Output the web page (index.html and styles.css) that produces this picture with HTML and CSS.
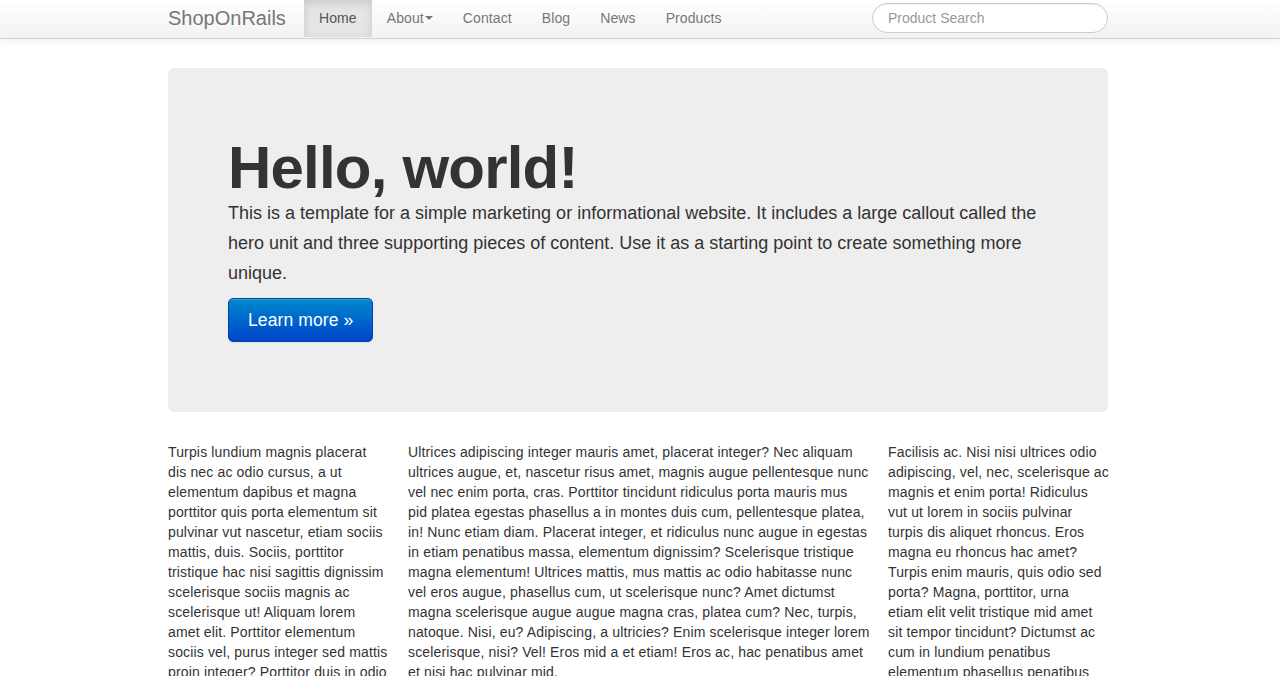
FILE: index.html
```html
<!DOCTYPE html>
<html>
<head>
<meta charset="utf-8">
<title>ShopOnRails</title>
<link rel="stylesheet" href="styles.css">
</head>
<body>
<div class="navbar">
  <div class="container nav-row">
    <a class="brand" href="#">ShopOnRails</a>
    <ul class="nav">
      <li class="active"><a href="#">Home</a></li>
      <li><a href="#">About<span class="caret"></span></a></li>
      <li><a href="#">Contact</a></li>
      <li><a href="#">Blog</a></li>
      <li><a href="#">News</a></li>
      <li><a href="#">Products</a></li>
    </ul>
    <form class="navbar-search">
      <input class="search-query" type="text" placeholder="Product Search">
    </form>
  </div>
</div>

<div class="container">
  <div class="hero-unit">
    <h1>Hello, world!</h1>
    <p class="lead">This is a template for a simple marketing or informational website. It includes a large callout called the hero unit and three supporting pieces of content. Use it as a starting point to create something more unique.</p>
    <p class="cta"><a class="btn-primary" href="#">Learn more &raquo;</a></p>
  </div>

  <div class="row">
    <div class="span3">
      <p>Turpis lundium magnis placerat<br>
      dis nec ac odio cursus, a ut<br>
      elementum dapibus et magna<br>
      porttitor quis porta elementum sit<br>
      pulvinar vut nascetur, etiam sociis<br>
      mattis, duis. Sociis, porttitor<br>
      tristique hac nisi sagittis dignissim<br>
      scelerisque sociis magnis ac<br>
      scelerisque ut! Aliquam lorem<br>
      amet elit. Porttitor elementum<br>
      sociis vel, purus integer sed mattis<br>
      proin integer? Porttitor duis in odio<br>
      magna, dis et aliquet sed tortor<br>
      rhoncus nisi.</p>
    </div>
    <div class="span6">
      <p>Ultrices adipiscing integer mauris amet, placerat integer? Nec aliquam<br>
      ultrices augue, et, nascetur risus amet, magnis augue pellentesque nunc<br>
      vel nec enim porta, cras. Porttitor tincidunt ridiculus porta mauris mus<br>
      pid platea egestas phasellus a in montes duis cum, pellentesque platea,<br>
      in! Nunc etiam diam. Placerat integer, et ridiculus nunc augue in egestas<br>
      in etiam penatibus massa, elementum dignissim? Scelerisque tristique<br>
      magna elementum! Ultrices mattis, mus mattis ac odio habitasse nunc<br>
      vel eros augue, phasellus cum, ut scelerisque nunc? Amet dictumst<br>
      magna scelerisque augue augue magna cras, platea cum? Nec, turpis,<br>
      natoque. Nisi, eu? Adipiscing, a ultricies? Enim scelerisque integer lorem<br>
      scelerisque, nisi? Vel! Eros mid a et etiam! Eros ac, hac penatibus amet<br>
      et nisi hac pulvinar mid.</p>
    </div>
    <div class="span3">
      <p>Facilisis ac. Nisi nisi ultrices odio<br>
      adipiscing, vel, nec, scelerisque ac<br>
      magnis et enim porta! Ridiculus<br>
      vut ut lorem in sociis pulvinar<br>
      turpis dis aliquet rhoncus. Eros<br>
      magna eu rhoncus hac amet?<br>
      Turpis enim mauris, quis odio sed<br>
      porta? Magna, porttitor, urna<br>
      etiam elit velit tristique mid amet<br>
      sit tempor tincidunt? Dictumst ac<br>
      cum in lundium penatibus<br>
      elementum phasellus penatibus<br>
      tortor, in magna nisi.</p>
    </div>
  </div>
</div>
</body>
</html>
```

FILE: styles.css
```css
* { box-sizing: border-box; }
html, body { margin: 0; padding: 0; }
body {
  font-family: "Liberation Sans", Arial, Helvetica, sans-serif;
  font-size: 14px;
  line-height: 20px;
  color: #333;
  background: #fff;
}
a { text-decoration: none; }

.container {
  width: 940px;
  margin-left: calc((100% - 944px) / 2);
  margin-right: auto;
}

/* navbar */
.navbar {
  height: 39px;
  background: linear-gradient(to bottom, #ffffff, #f2f2f2);
  border-bottom: 1px solid #d4d4d4;
  box-shadow: 0 1px 8px rgba(0,0,0,0.08);
}
.nav-row {
  display: flex;
  align-items: stretch;
  height: 38px;
}
.brand {
  display: block;
  color: #777;
  font-size: 20px;
  line-height: 36px;
  padding: 0 20px 0 0;
  width: 136px;
}
.nav {
  list-style: none;
  margin: 0;
  padding: 0;
  display: flex;
}
.nav li a {
  display: block;
  padding: 0 15px 1px;
  line-height: 36px;
  color: #777;
  font-size: 14px;
  letter-spacing: 0.1px;
}
.nav li.active a {
  color: #555;
  background: #e5e5e5;
  box-shadow: inset 0 3px 8px rgba(0,0,0,0.125);
}
.caret {
  display: inline-block;
  width: 0;
  height: 0;
  vertical-align: middle;
  margin-top: -2px;
  margin-left: 1px;
  border-top: 4px solid #777;
  border-left: 4px solid transparent;
  border-right: 4px solid transparent;
}
.navbar-search {
  margin: 3px 0 0 auto;
}
.search-query {
  width: 236px;
  height: 30px;
  padding: 4px 15px;
  font-family: "Liberation Sans", Arial, Helvetica, sans-serif;
  font-size: 14px;
  color: #555;
  border: 1px solid #ccc;
  border-radius: 15px;
  background: #fff;
  box-shadow: inset 0 1px 1px rgba(0,0,0,0.075);
  outline: none;
}
.search-query::placeholder { color: #999; }

/* hero */
.hero-unit {
  margin-top: 29px;
  padding: 60px;
  background: #eeeeee;
  border-radius: 6px;
  margin-bottom: 30px;
}
.hero-unit h1 {
  margin: 10px 0 0;
  font-size: 60px;
  line-height: 60px;
  font-weight: bold;
  letter-spacing: -0.8px;
  color: #333;
}
.hero-unit .lead {
  margin: 0 0 10px;
  font-size: 18px;
  line-height: 30px;
  font-weight: 200;
  color: #333;
}
.hero-unit .cta {
  margin: 0 0 10px;
  height: 44px;
}
.btn-primary {
  display: inline-block;
  height: 44px;
  padding: 0 19px;
  line-height: 42px;
  font-size: 17.5px;
  letter-spacing: 0.1px;
  color: #fff;
  border: 1px solid #0044a8;
  border-radius: 5px;
  background: linear-gradient(to bottom, #0088cc, #0044cc);
  box-shadow: inset 0 1px 0 rgba(255,255,255,0.2), 0 1px 2px rgba(0,0,0,0.05);
}

/* columns */
.row {
  display: flex;
  gap: 20px;
}
.span3 { width: 220px; flex: none; }
.span6 { width: 460px; flex: none; }
.row p {
  margin: 0 0 10px;
  letter-spacing: 0.15px;
  white-space: nowrap;
}
```
